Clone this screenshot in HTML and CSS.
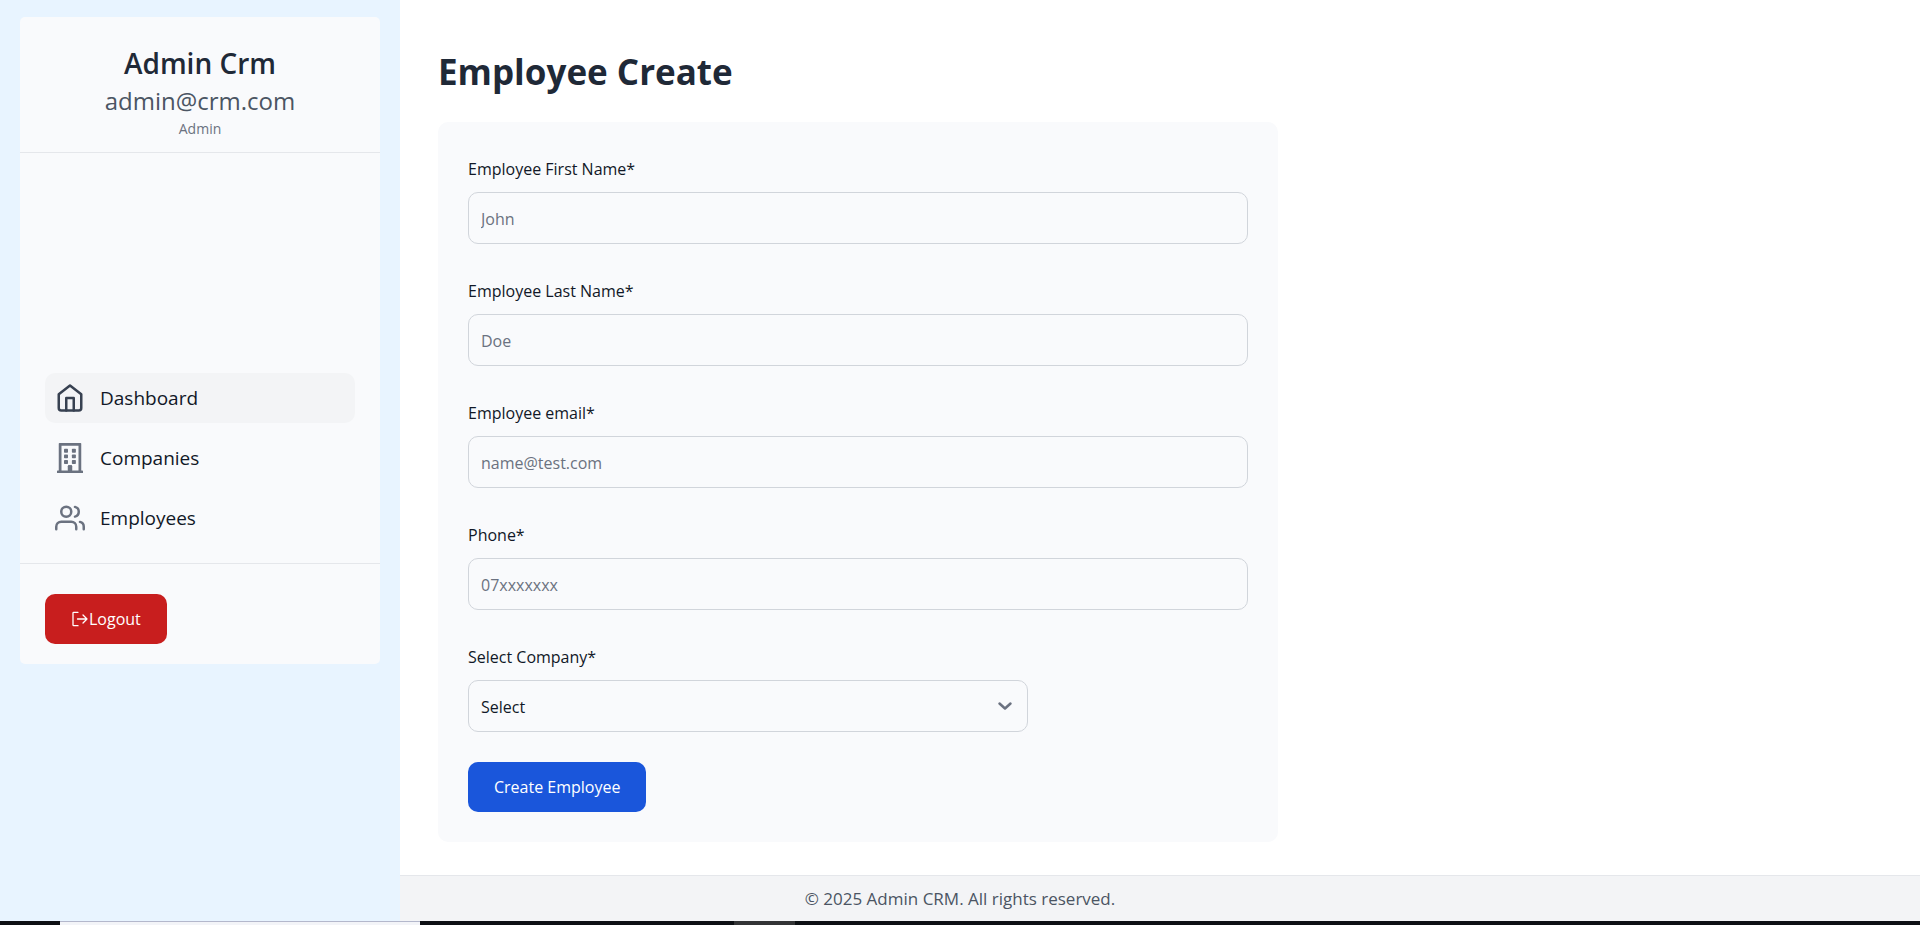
FILE: index.html
```html
<!DOCTYPE html>
<html lang="en">
<head>
<meta charset="utf-8">
<title>Admin CRM</title>
<link rel="stylesheet" href="styles.css">
</head>
<body>
<div class="page">
  <aside class="sidebar">
    <div class="panel">
      <header class="profile">
        <h2 class="profile-name">Admin Crm</h2>
        <p class="profile-email">admin@crm.com</p>
        <p class="profile-role">Admin</p>
      </header>
      <nav class="nav">
        <a class="nav-link active" href="#">
          <svg class="nav-icon" viewBox="0 0 24 24"><path d="M3 9l9-7 9 7v11a2 2 0 0 1-2 2H5a2 2 0 0 1-2-2z"/><path d="M9 22V12h6v10"/></svg>
          Dashboard
        </a>
        <a class="nav-link" href="#">
          <svg class="nav-icon solid" viewBox="0 0 24 24"><path fill-rule="evenodd" d="M3.600 0h16.800q.6 0 .6.6v21.400h.9q.5 0 .5.5V24H1.600v-1.500q0-.5.5-.5H3V.6Q3 0 3.600 0zM5.200 2.100V22h5.100v-3.500q0-.7.7-.7h2q.7 0 .7.7V22h5.100V2.100z"/><rect x="7.200" y="4.600" width="3.200" height="3.100" rx=".6"/><rect x="13.500" y="4.600" width="3.200" height="3.100" rx=".6"/><rect x="7.200" y="9.100" width="3.200" height="3.100" rx=".6"/><rect x="13.500" y="9.100" width="3.200" height="3.100" rx=".6"/><rect x="7.200" y="13.600" width="3.200" height="3.100" rx=".6"/><rect x="13.500" y="13.600" width="3.200" height="3.100" rx=".6"/><path d="M10.300 22v-3.500q0-.7.7-.7h2q.7 0 .7.7V22z"/></svg>
          Companies
        </a>
        <a class="nav-link" href="#">
          <svg class="nav-icon" viewBox="0 0 24 24"><path d="M17 21v-2a4 4 0 0 0-4-4H5a4 4 0 0 0-4 4v2"/><circle cx="9" cy="7" r="4"/><path d="M23 21v-2a4 4 0 0 0-3-3.870M16 3.130a4 4 0 0 1 0 7.750"/></svg>
          Employees
        </a>
      </nav>
      <div class="panel-end">
        <button class="button logout" type="button">
          <svg class="logout-icon" viewBox="0 0 18 18"><path d="M7 2.300H2.700q-.7 0-.7.7v12q0 .7.7.7H7M6.500 9h9.500M12 5l4 4-4 4"/></svg>Logout</button>
      </div>
    </div>
  </aside>
  <div class="content">
    <main class="main">
      <h1 class="title">Employee Create</h1>
      <form class="form">
        <div class="field">
          <label class="label" for="first">Employee First Name*</label>
          <input class="control" id="first" type="text" placeholder="John">
        </div>
        <div class="field">
          <label class="label" for="last">Employee Last Name*</label>
          <input class="control" id="last" type="text" placeholder="Doe">
        </div>
        <div class="field">
          <label class="label" for="email">Employee email*</label>
          <input class="control" id="email" type="email" placeholder="name@test.com">
        </div>
        <div class="field">
          <label class="label" for="phone">Phone*</label>
          <input class="control" id="phone" type="tel" placeholder="07xxxxxxx">
        </div>
        <div class="field">
          <label class="label" for="company">Select Company*</label>
          <div class="select-wrap">
            <select class="control" id="company"><option>Select</option></select>
            <svg class="chevron" viewBox="0 0 16 16"><path d="M2.500 5.500 8 10.500l5.500-5"/></svg>
          </div>
        </div>
        <button class="button submit" type="submit">Create Employee</button>
      </form>
    </main>
    <footer class="footer">© 2025 Admin CRM. All rights reserved.</footer>
  </div>
</div>
<div class="taskbar"><span class="task-search"></span><span class="task-active"></span></div>
</body>
</html>
```
FILE: styles.css
```css
* {
  box-sizing: border-box;
}

body {
  margin: 0;
  min-height: 100vh;
  display: flex;
  flex-direction: column;
  background: #fff;
  color: #111827;
  font-family: "Segoe UI", "Open Sans", "Noto Sans", sans-serif;
  font-size: 16px;
  line-height: 25px;
}

h1, h2, p {
  margin: 0;
}

.page {
  flex: 1;
  display: flex;
}

.sidebar {
  flex: 0 0 400px;
  padding: 17px 20px;
  background: #e8f4ff;
}

.panel {
  background: #f9fafc;
  border-radius: 5px;
}

.profile {
  padding: 26px 20px 13px;
  border-bottom: 1px solid #e5e7eb;
  text-align: center;
}

.profile-name {
  color: #1f2937;
  font-size: 28px;
  font-weight: 600;
  line-height: 40px;
}

.profile-email {
  color: #4b5563;
  font-size: 24px;
  line-height: 36px;
}

.profile-role {
  color: #6b7280;
  font-size: 14px;
  line-height: 20px;
}

.nav {
  display: flex;
  flex-direction: column;
  gap: 10px;
  padding: 220px 25px 20px;
  border-bottom: 1px solid #e5e7eb;
}

.nav-link {
  display: flex;
  align-items: center;
  gap: 15px;
  padding: 10px;
  border-radius: 10px;
  color: #111827;
  font-size: 19px;
  line-height: 30px;
  text-decoration: none;
}

.nav-link.active {
  background: #f3f4f6;
}

.nav-icon {
  width: 30px;
  height: 30px;
  fill: none;
  stroke: #6b7280;
  stroke-width: 2;
  stroke-linecap: round;
  stroke-linejoin: round;
}

.nav-icon.solid {
  fill: #6b7280;
  stroke: none;
}

.active .nav-icon {
  stroke: #374151;
}

.panel-end {
  display: flex;
  padding: 30px 25px 20px;
}

.button {
  display: flex;
  align-items: center;
  height: 50px;
  padding: 0 26px;
  border: 0;
  border-radius: 10px;
  color: #fff;
  font: inherit;
}

.logout {
  background: #c81e1e;
}

.logout-icon {
  width: 18px;
  height: 18px;
  fill: none;
  stroke: #fff;
  stroke-width: 1.3;
  stroke-linecap: round;
  stroke-linejoin: round;
}

.content {
  flex: 1;
  display: flex;
  flex-direction: column;
}

.main {
  flex: 1;
  padding: 49px 38px 32px;
}

.title {
  margin-bottom: 28px;
  color: #1f2937;
  font-size: 35px;
  font-weight: 700;
  line-height: 45px;
}

.form {
  display: flex;
  flex-direction: column;
  max-width: 840px;
  padding: 35px 30px 30px;
  border-radius: 10px;
  background: #f9fafc;
}

.field {
  display: flex;
  flex-direction: column;
  gap: 10px;
  margin-bottom: 35px;
}

.field:nth-of-type(5) {
  margin-bottom: 30px;
}

.control {
  display: block;
  width: 100%;
  height: 52px;
  padding: 2px 12px 0;
  border: 1px solid #d1d5db;
  border-radius: 10px;
  background: #f9fafc;
  color: #111827;
  font: inherit;
  appearance: none;
}

.control::placeholder {
  color: #6b7280;
  opacity: 1;
}

.select-wrap {
  position: relative;
  max-width: 560px;
}

.chevron {
  position: absolute;
  right: 15px;
  top: 18px;
  width: 16px;
  height: 16px;
  fill: none;
  stroke: #6b7280;
  stroke-width: 2.5;
  stroke-linecap: round;
  stroke-linejoin: round;
  pointer-events: none;
}

.submit {
  align-self: flex-start;
  background: #1a56db;
}

.footer {
  padding: 10px 400px 10px 0;
  border-top: 1px solid #e5e7eb;
  background: #f3f4f6;
  color: #4b5563;
  font-size: 17px;
  text-align: center;
}

.taskbar {
  display: flex;
  height: 4px;
  padding-left: 60px;
  background: #0d1014;
}

.task-search {
  width: 360px;
  margin-right: 314px;
  border-top: 1px solid #b4b8cc;
  background: #f3f4f8;
}

.task-active {
  width: 61px;
  background: #333436;
}
```
